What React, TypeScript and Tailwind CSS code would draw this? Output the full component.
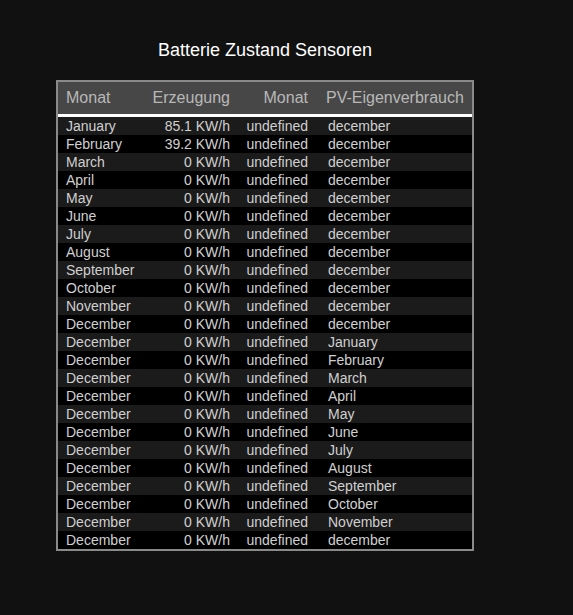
const ROWS: [string, string, string, string][] = [
  ["January", "85.1 KW/h", "undefined", "december"],
  ["February", "39.2 KW/h", "undefined", "december"],
  ["March", "0 KW/h", "undefined", "december"],
  ["April", "0 KW/h", "undefined", "december"],
  ["May", "0 KW/h", "undefined", "december"],
  ["June", "0 KW/h", "undefined", "december"],
  ["July", "0 KW/h", "undefined", "december"],
  ["August", "0 KW/h", "undefined", "december"],
  ["September", "0 KW/h", "undefined", "december"],
  ["October", "0 KW/h", "undefined", "december"],
  ["November", "0 KW/h", "undefined", "december"],
  ["December", "0 KW/h", "undefined", "december"],
  ["December", "0 KW/h", "undefined", "January"],
  ["December", "0 KW/h", "undefined", "February"],
  ["December", "0 KW/h", "undefined", "March"],
  ["December", "0 KW/h", "undefined", "April"],
  ["December", "0 KW/h", "undefined", "May"],
  ["December", "0 KW/h", "undefined", "June"],
  ["December", "0 KW/h", "undefined", "July"],
  ["December", "0 KW/h", "undefined", "August"],
  ["December", "0 KW/h", "undefined", "September"],
  ["December", "0 KW/h", "undefined", "October"],
  ["December", "0 KW/h", "undefined", "November"],
  ["December", "0 KW/h", "undefined", "december"],
];

export default function App() {
  return (
    <div className="min-h-[615px] bg-[#111111] pt-[38px] font-['Liberation_Sans',Arial,sans-serif]">
      <div className="ml-[56px] w-[418px]">
        <h1 className="text-center text-[18px] leading-[24px] text-white">Batterie Zustand Sensoren</h1>

        <div className="mt-[18px] border-2 border-[#8a8a8a]">
          {/* Kopfzeile */}
          <div className="grid h-[35px] grid-cols-[88px_92px_78px_1fr] items-center border-b-[3px] border-white bg-[#474747] text-[16px] text-[#b8b8b8]">
            <div className="pl-[8px]">Monat</div>
            <div className="pr-[8px] text-right">Erzeugung</div>
            <div className="pr-[8px] text-right">Monat</div>
            <div className="pl-[10px]">PV-Eigenverbrauch</div>
          </div>

          {ROWS.map((r, i) => (
            <div
              key={i}
              className={
                "grid h-[18px] grid-cols-[88px_92px_78px_1fr] items-center text-[14px] leading-[18px] text-[#d0d0d0] " +
                (i % 2 === 0 ? "bg-[#1b1b1b]" : "bg-black")
              }
            >
              <div className="pl-[8px]">{r[0]}</div>
              <div className="pr-[8px] text-right">{r[1]}</div>
              <div className="pr-[8px] text-right">{r[2]}</div>
              <div className="pl-[12px]">{r[3]}</div>
            </div>
          ))}
        </div>
      </div>
    </div>
  );
}
